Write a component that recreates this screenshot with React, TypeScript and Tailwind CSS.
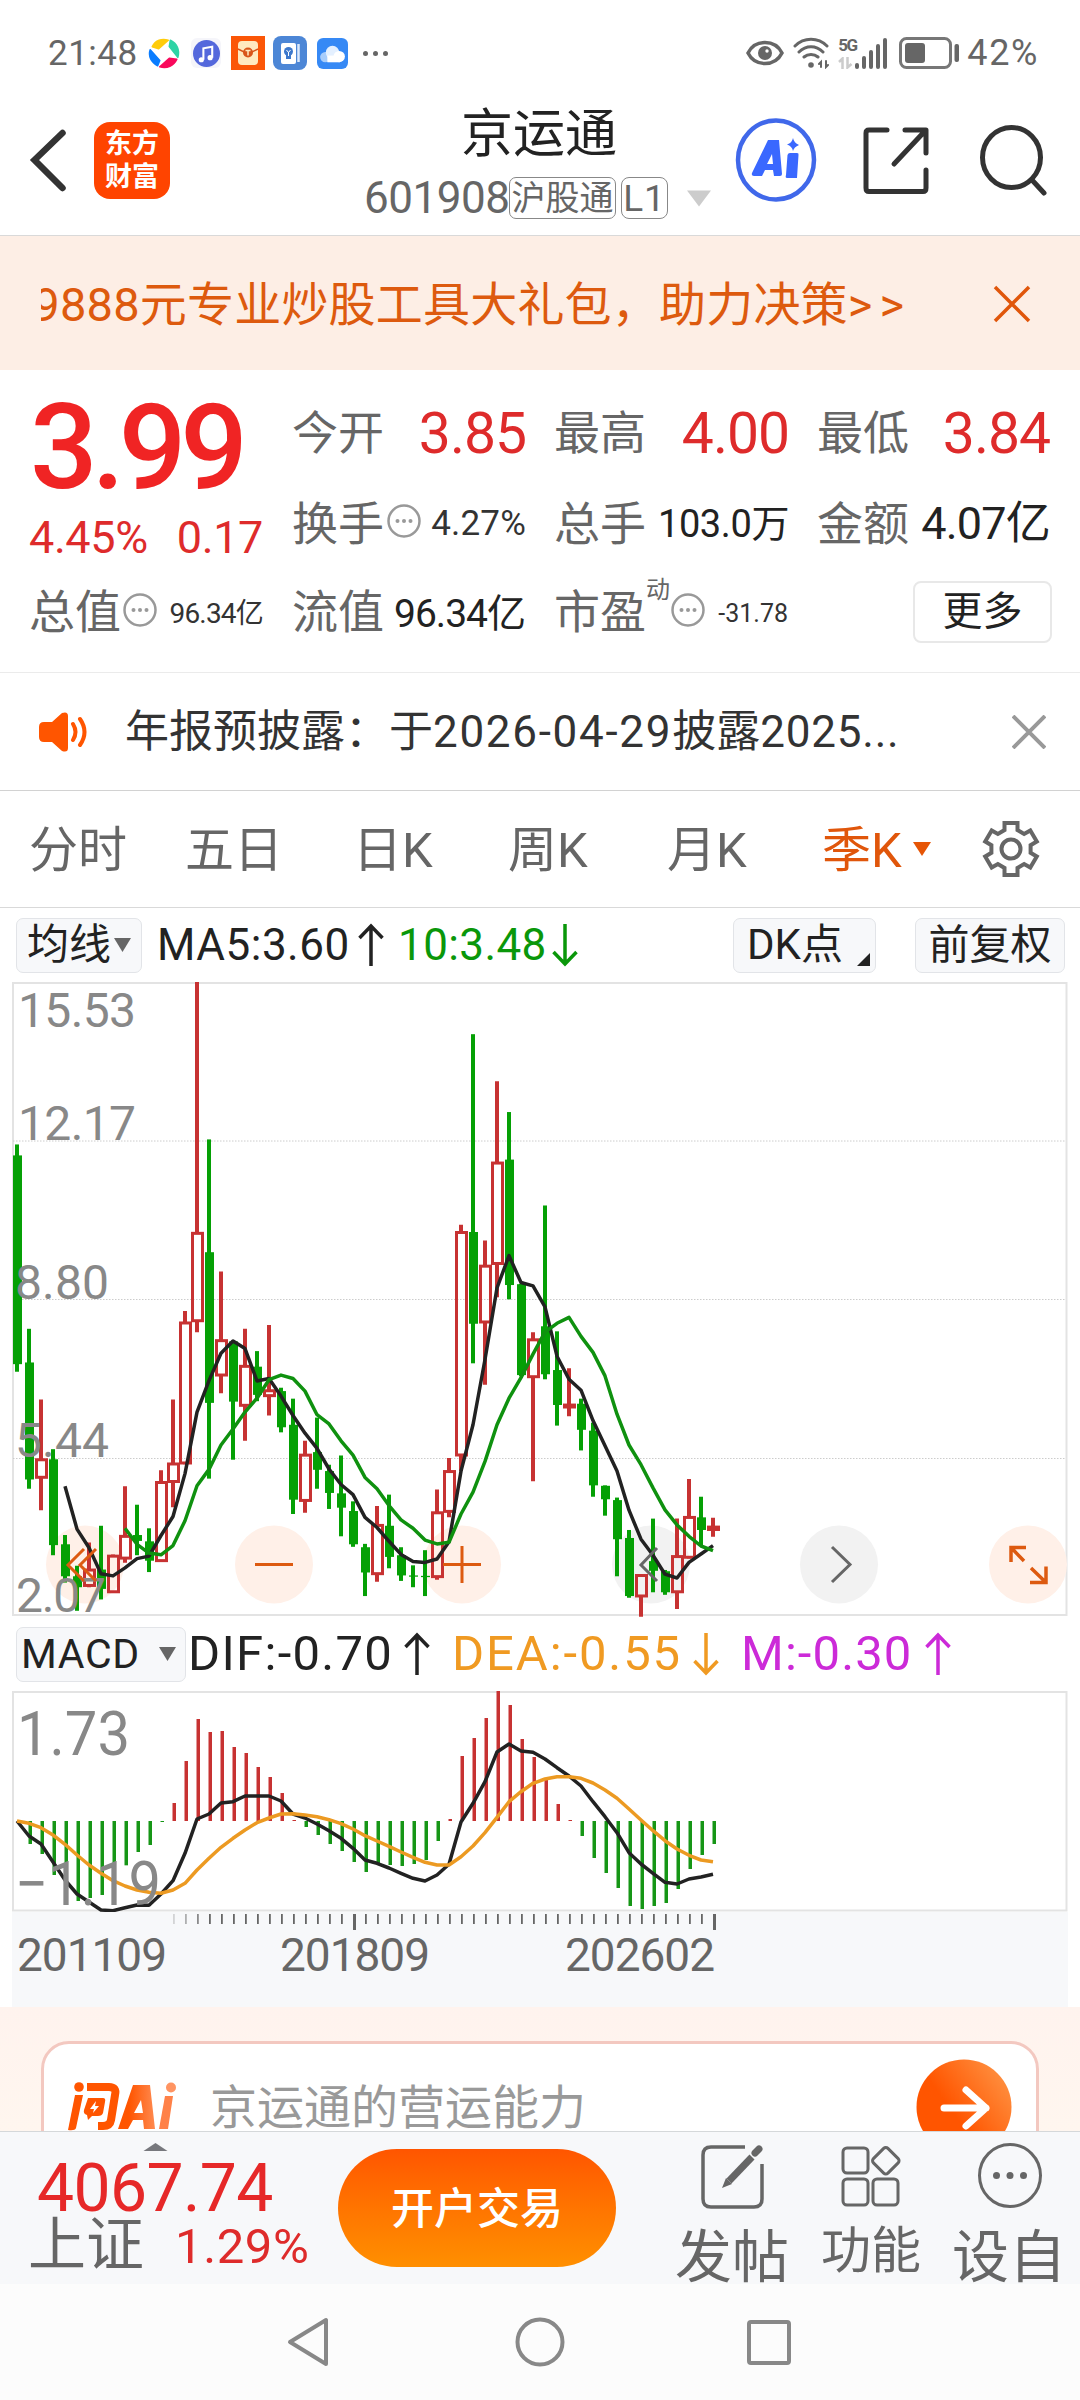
import React from 'react';

const RED = '#c73232';
const GREEN = '#05a005';

/* [high, body top, body bottom, low, rising] in chart units */
const CANDLES: [number, number, number, number, number][] = [
  [414, 440, 936, 954, 0], [852, 932, 1210, 1232, 0], [1020, 1162, 1206, 1283, 1], [1138, 1162, 1366, 1390, 0],
  [1342, 1364, 1440, 1455, 0], [1415, 1440, 1466, 1522, 0], [1360, 1424, 1463, 1466, 1], [1320, 1424, 1470, 1495, 0],
  [1388, 1391, 1478, 1480, 1], [1226, 1344, 1398, 1408, 1], [1270, 1342, 1356, 1390, 0], [1326, 1357, 1403, 1430, 0],
  [1188, 1216, 1404, 1406, 1], [1020, 1172, 1216, 1276, 1], [810, 837, 1172, 1174, 1], [28, 624, 834, 860, 1],
  [402, 670, 1028, 1208, 0], [716, 879, 963, 1005, 1], [880, 882, 1025, 1163, 0], [852, 940, 1035, 1118, 1],
  [905, 942, 1009, 1024, 0], [843, 998, 1012, 1058, 1], [992, 1000, 1086, 1098, 0], [1018, 1080, 1258, 1292, 0],
  [1118, 1151, 1261, 1289, 1], [1063, 1145, 1187, 1232, 0], [1175, 1190, 1242, 1280, 0], [1153, 1243, 1277, 1345, 0],
  [1262, 1285, 1364, 1370, 0], [1363, 1371, 1431, 1487, 0], [1273, 1318, 1435, 1453, 1], [1246, 1320, 1394, 1421, 0],
  [1371, 1390, 1438, 1451, 0], [1414, 1438, 1441, 1466, 0], [1378, 1439, 1442, 1487, 0], [1234, 1288, 1442, 1448, 1],
  [1159, 1190, 1287, 1300, 1], [605, 622, 1153, 1190, 1], [152, 622, 840, 934, 0], [642, 702, 837, 985, 1],
  [264, 457, 698, 777, 1], [337, 450, 748, 782, 0], [745, 746, 962, 965, 0], [860, 877, 967, 1214, 1],
  [559, 846, 960, 972, 0], [858, 950, 1033, 1082, 0], [946, 1032, 1039, 1060, 1], [1018, 1030, 1092, 1141, 0],
  [1075, 1094, 1224, 1251, 0], [1224, 1225, 1257, 1296, 0], [1253, 1259, 1352, 1440, 0], [1330, 1349, 1487, 1491, 0],
  [1435, 1437, 1488, 1536, 1], [1303, 1404, 1427, 1478, 0], [1425, 1428, 1478, 1484, 0], [1303, 1392, 1478, 1518, 1],
  [1209, 1299, 1396, 1398, 1], [1251, 1300, 1330, 1368, 0], [1301, 1322, 1330, 1346, 1],
];
const MA5 = [1226, 1328, 1372, 1434, 1439, 1420, 1398, 1392, 1343, 1298, 1196, 1050, 975, 910, 881, 899, 976, 970, 1012, 1058, 1100, 1136, 1185, 1222, 1246, 1300, 1324, 1357, 1388, 1405, 1407, 1399, 1358, 1190, 1080, 925, 755, 678, 742, 750, 800, 917, 972, 998, 1070, 1130, 1190, 1283, 1352, 1390, 1435, 1444, 1407, 1387, 1367];
const MA10 = [1326, 1364, 1385, 1389, 1367, 1308, 1225, 1186, 1128, 1090, 1050, 1017, 973, 962, 970, 1000, 1056, 1078, 1118, 1152, 1205, 1232, 1272, 1306, 1326, 1354, 1363, 1359, 1292, 1240, 1167, 1080, 1017, 968, 912, 860, 839, 825, 870, 908, 964, 1055, 1128, 1175, 1230, 1282, 1318, 1345, 1368, 1379];

/* Histogram, DIF and DEA heights: 633 is the zero line, three units per pixel */
const HIST = [633, 702, 732, 795, 846, 873, 864, 855, 800, 766, 726, 705, 636, 579, 453, 327, 366, 363, 411, 429, 471, 501, 549, 630, 651, 675, 702, 723, 756, 786, 762, 765, 768, 762, 750, 693, 627, 438, 384, 324, 243, 285, 387, 441, 510, 582, 630, 678, 744, 789, 834, 888, 897, 888, 879, 837, 777, 735, 702];
const DIF = [633, 678, 702, 756, 810, 852, 876, 900, 902, 893, 885, 886, 852, 812, 730, 627, 612, 579, 575, 558, 558, 558, 573, 612, 624, 642, 662, 685, 715, 750, 760, 774, 790, 805, 813, 795, 763, 636, 580, 515, 426, 402, 423, 427, 447, 473, 498, 528, 575, 620, 668, 728, 762, 790, 817, 822, 807, 801, 793];
const DEA = [633, 640, 653, 675, 703, 735, 765, 790, 812, 828, 840, 847, 850, 840, 820, 780, 745, 712, 685, 660, 638, 624, 612, 611, 615, 620, 629, 641, 657, 677, 693, 709, 726, 742, 757, 765, 765, 740, 708, 668, 622, 575, 545, 520, 507, 500, 500, 505, 519, 540, 565, 597, 630, 662, 692, 717, 736, 750, 755];

const px = (i: number) => 17 + 12 * i;
const ky = (v: number) => (v - 28) / 2.376;
const my = (v: number) => (v - 243) / 3;
const line = (vals: number[], start: number, f: (v: number) => number) =>
  vals.map((v, i) => `${px(i + start)},${f(v).toFixed(1)}`).join(' ');

const Arrow = ({ down = false, className = '' }: { down?: boolean; className?: string }) => (
  <svg viewBox="0 0 26 44" className={`h-[44px] w-[26px] shrink-0 ${className}`} fill="none" stroke="currentColor" strokeWidth="3.500">
    {down ? <path d="M13 1V41M1.500 29L13 41L24.500 29" /> : <path d="M13 43V3M1.500 15L13 3L24.500 15" />}
  </svg>
);

const Info = ({ className = '' }: { className?: string }) => (
  <svg viewBox="0 0 34 34" className={`h-[34px] w-[34px] shrink-0 ${className}`}>
    <circle cx="17" cy="17" r="15.500" fill="none" stroke="#999" strokeWidth="2.500" />
    {[10.5, 17, 23.5].map((x) => <circle key={x} cx={x} cy="17" r="2" fill="#999" />)}
  </svg>
);

function StatusBar() {
  return (
    <div className="flex h-[84px] items-center pt-[22px] text-[#666]">
      <span className="ml-[48px] w-[99px] text-[35px] tracking-[0.5px]">21:48</span>
      <svg viewBox="0 0 32 32" className="h-[34px] w-[34px]" fill="none" strokeWidth="7">
        <path d="M5 10C8 4 14 2 20 4L11 12Z" fill="#ffcc0a" stroke="#ffcc0a" strokeWidth="1.5" strokeLinejoin="round" />
        <path d="M22 4C28 7 31 13 29 20L21 10Z" fill="#2fd3a5" stroke="#2fd3a5" strokeWidth="1.5" strokeLinejoin="round" />
        <path d="M28 22C25 28 19 31 12 29L21 21Z" fill="#f9095c" stroke="#f9095c" strokeWidth="1.5" strokeLinejoin="round" />
        <path d="M10 28C4 25 1 19 3 13L12 23Z" fill="#0a7cff" stroke="#0a7cff" strokeWidth="1.5" strokeLinejoin="round" />
      </svg>
      <div className="ml-[10px] flex h-[30px] w-[30px] items-center justify-center rounded-md bg-[#f5f5fa]">
        <svg viewBox="0 0 26 26" className="h-[27px] w-[27px]">
          <circle cx="13" cy="13" r="13" fill="#5468dc" />
          <path d="M10 19V8L18.500 6.500V17" fill="none" stroke="#fff" strokeWidth="2" />
          <circle cx="8" cy="19" r="2.500" fill="#fff" /><circle cx="16.500" cy="17" r="2.500" fill="#fff" />
        </svg>
      </div>
      <svg viewBox="0 0 34 34" className="ml-[10px] h-[34px] w-[34px]">
        <rect width="34" height="34" fill="#fb5607" />
        <rect x="7" y="5" width="20" height="24" rx="4" fill="#ffe9c0" />
        <path d="M7 13L17 18L27 13" fill="none" stroke="#d9541a" strokeWidth="1.500" />
        <circle cx="17" cy="16.500" r="5" fill="#d9541a" /><path d="M14.500 14.500H19.500M17 14.500V19.500" stroke="#ffe9c0" strokeWidth="1.500" />
      </svg>
      <svg viewBox="0 0 34 34" className="ml-[8px] h-[34px] w-[34px]">
        <rect width="34" height="34" rx="8" fill="#4c86d6" />
        <rect x="8" y="7" width="15" height="21" rx="2" fill="#fff" />
        <path d="M25.500 8V26" stroke="#dce9fb" strokeWidth="2.500" />
        <circle cx="15.500" cy="15.500" r="4.500" fill="#3d78cc" /><rect x="13" y="19" width="5" height="4" fill="#3d78cc" />
        <path d="M13.500 14L15.500 16.500L17.500 14M15.500 16V20" stroke="#fff" fill="none" />
      </svg>
      <svg viewBox="0 0 30 30" className="ml-[10px] h-[31px] w-[31px]">
        <rect width="30" height="30" rx="6" fill="#3689f5" />
        <circle cx="8" cy="18.500" r="5" fill="#a8cdfb" /><circle cx="15" cy="14" r="6.500" fill="#e4f0ff" />
        <circle cx="21.500" cy="18" r="5.500" fill="#fff" /><rect x="10" y="17" width="12" height="6.500" fill="#fff" />
      </svg>
      <div className="ml-[15px] flex gap-[5px]">
        <i className="h-[5px] w-[5px] rounded-full bg-[#666]" /><i className="h-[5px] w-[5px] rounded-full bg-[#666]" /><i className="h-[5px] w-[5px] rounded-full bg-[#666]" />
      </div>
      <svg viewBox="0 0 38 26" className="ml-auto h-[26px] w-[38px]" fill="none" stroke="#666" strokeWidth="3.500">
        <path d="M2 13C9 -1 29 -1 36 13C29 27 9 27 2 13Z" /><circle cx="19" cy="13" r="7" fill="#666" stroke="none" /><circle cx="21" cy="11" r="1.700" fill="#fff" stroke="none" />
      </svg>
      <svg viewBox="0 0 38 32" className="ml-[9px] h-[32px] w-[38px]" fill="none" stroke="#666" strokeWidth="3" strokeLinecap="round">
        <path d="M2 9C11 0 25 0 34 9M6 15C13 8 23 8 30 15M11 20C15 16.500 21 16.500 25 20" />
        <circle cx="18" cy="28" r="2.800" fill="#666" stroke="none" />
        <path d="M28 30V25L26 27M33 24V30L35 28" strokeWidth="2" />
      </svg>
      <div className="ml-[7px] flex h-[32px] items-end">
        <div className="flex h-[32px] w-[17px] flex-col justify-between">
          <span className="text-[17px] font-bold tracking-[-1.5px]">5G</span>
          <svg viewBox="0 0 15 12" className="h-[12px] w-[15px]" fill="none" stroke="#ccc" strokeWidth="2.500"><path d="M1 5L4.500 1.500V12M9.500 0V10.500L13.500 7" /></svg>
        </div>
        <div className="flex items-end gap-[3px]">
          <i className="h-[6px] w-[4px] rounded bg-[#666]" /><i className="h-[13px] w-[4px] rounded bg-[#666]" /><i className="h-[19px] w-[4px] rounded bg-[#666]" /><i className="h-[25px] w-[4px] rounded bg-[#666]" /><i className="h-[31px] w-[4px] rounded bg-[#666]" />
        </div>
      </div>
      <svg viewBox="0 0 60 32" className="ml-[12px] h-[32px] w-[60px]">
        <rect x="1.500" y="1.500" width="50" height="29" rx="6" fill="none" stroke="#777" strokeWidth="3" />
        <rect x="6" y="6" width="20" height="20" rx="3" fill="#666" /><rect x="55.500" y="7" width="4.500" height="18" rx="2" fill="#666" />
      </svg>
      <span className="ml-[8px] mr-[41px] text-[36px] tracking-[1.6px]">42%</span>
    </div>
  );
}

function Header() {
  return (
    <header className="flex h-[152px] items-start border-b border-[#d9d9d9] text-[#333]">
      <svg viewBox="0 0 40 64" className="mt-[44px] ml-[29px] h-[64px] w-[40px]" fill="none" stroke="#333" strokeWidth="6.500" strokeLinecap="round">
        <path d="M33.500 5L5.500 32L33.500 60" />
      </svg>
      <div className="mt-[38px] ml-[25px] flex h-[77px] w-[76px] flex-col items-center justify-center gap-[6px] rounded-[16px] bg-[#ff4400] text-[27px] font-bold text-white">
        <span>东方</span><span>财富</span>
      </div>
      <div className="ml-[194px] flex w-[360px] flex-col">
        <h1 className="mt-[25px] ml-[97px] text-[52px] text-[#222]">京运通</h1>
        <div className="mt-[15px] flex items-center text-[44px] text-[#666]">
          <span className="w-[145px] tracking-[-0.5px]">601908</span>
          <span className="flex h-[42px] w-[107px] items-center justify-center rounded-[7px] border border-[#888] text-[34px]">沪股通</span>
          <span className="ml-[5px] flex h-[42px] w-[47px] items-center justify-center rounded-[8px] border border-[#888] text-[37px] tracking-[1px]">L1</span>
          <svg viewBox="0 0 24 16" className="ml-[19px] h-[17px] w-[24px]"><path d="M0 0H24L12 16Z" fill="#ccc" /></svg>
        </div>
      </div>
      <svg viewBox="0 0 82 84" className="mt-[34px] ml-[11px] h-[84px] w-[82px]">
        <ellipse cx="41" cy="42" rx="38" ry="39.500" fill="none" stroke="#4068ea" strokeWidth="4.500" />
        <path fillRule="evenodd" d="M33 22H44L47 56Q47 58 45 58H39L38 52H30L27 58H19Q16 58 17 55ZM37 36L32 46H38Z" fill="#3a68ff" />
        <path d="M55 35H62Q64 35 63.500 37L62 60H52Q50 60 51 57L52.500 37Q53 35 55 35Z" fill="#3a68ff" />
        <path d="M58 20Q59 25 64 27Q59 29 58 33Q57 28 52 26.500Q57 25 58 20Z" fill="#3a68ff" />
      </svg>
      <svg viewBox="0 0 68 70" className="mt-[40px] ml-[46px] h-[70px] w-[68px]" fill="none" stroke="#333" strokeWidth="5" strokeLinecap="round" strokeLinejoin="round">
        <path d="M24 6H6Q3 6 3 9V64Q3 67.500 6 67.500H60Q63 67.500 63 64V46" /><path d="M42 6H63V29M62 7L31 40" />
      </svg>
      <svg viewBox="0 0 70 72" className="mt-[40px] ml-[47px] h-[72px] w-[70px]" fill="none" stroke="#333" strokeWidth="5" strokeLinecap="round">
        <ellipse cx="33.500" cy="33.500" rx="29" ry="30" /><path d="M54 56L66 69" />
      </svg>
    </header>
  );
}

function Banner() {
  return (
    <div className="flex h-[134px] items-center bg-[#fdeee5] pt-[2px] text-[47px] text-[#dd5a0e]">
      <div className="ml-[41px] flex w-[870px] justify-end overflow-hidden whitespace-nowrap py-2">
        <span className="tracking-[0.2px]">9888元专业炒股工具大礼包，助力决策<span className="tracking-[7px]">&gt;&gt;</span></span>
      </div>
      <svg viewBox="0 0 38 38" className="ml-[82px] h-[38px] w-[38px]" stroke="#e0560b" strokeWidth="3.500"><path d="M2 2L36 36M36 2L2 36" /></svg>
    </div>
  );
}

const label = 'text-[46px] text-[#666]';

function Quote() {
  return (
    <section className="h-[303px] border-b border-[#ebebeb] pl-[29px] pr-[28px]">
      <div className="flex h-[206px]">
        <div className="w-[263px] text-[#f02424]">
          <div className="mt-[18px] h-[119px] pl-[1px] text-[119px] font-medium tracking-[-6px]">3.99</div>
          <div className="mt-[8px] flex w-[234px] justify-between text-[45px] tracking-[-0.4px] text-[#de2b2b]"><span>4.45%</span><span>0.17</span></div>
        </div>
        <div className="grid flex-1 auto-rows-[91px] grid-cols-[234px_235px_233px] gap-x-[28px] pt-[17px]">
          {[['今开', '3.85'], ['最高', '4.00'], ['最低', '3.84']].map(([k, v]) => (
            <div key={k} className="flex items-center justify-between"><span className={label}>{k}</span><span className="pt-[1px] text-[57px] tracking-[-1px] text-[#de2b2b]">{v}</span></div>
          ))}
          <div className="flex items-center"><span className={label}>换手</span><Info className="ml-[3px] -mt-[6px]" /><span className="ml-auto text-[35px] tracking-[0.2px] text-[#333]">4.27%</span></div>
          <div className="flex items-center justify-between"><span className={label}>总手</span><span className="text-[38px] tracking-[-0.4px] text-[#222]">103.0万</span></div>
          <div className="flex items-center justify-between"><span className={label}>金额</span><span className="text-[45px] tracking-[-0.8px] text-[#222]">4.07亿</span></div>
        </div>
      </div>
      <div className="grid h-[72px] grid-cols-[234px_234px_235px_1fr] items-center gap-x-[28px]">
        <div className="flex items-center"><span className={label}>总值</span><Info className="ml-[2px] -mt-[5px]" /><span className="ml-auto pt-[3px] text-[28px] tracking-[-0.8px] text-[#333]">96.34亿</span></div>
        <div className="flex items-center justify-between pl-[1px]"><span className={label}>流值</span><span className="pt-[4px] text-[39px] tracking-[-1px] text-[#222]">96.34亿</span></div>
        <div className="flex items-center pl-[1px]"><span className={label}>市盈</span><span className="-mt-[45px] text-[24px] text-[#666]">动</span><Info className="ml-[1px] -mt-[5px]" /><span className="ml-auto pt-[3px] text-[25px] text-[#333]">-31.78</span></div>
        <div className="ml-auto flex h-[62px] w-[139px] items-center justify-center rounded-[8px] border-2 border-[#e8e8e8] pb-[1px] text-[40px] text-[#222]">更多</div>
      </div>
    </section>
  );
}

function Notice() {
  return (
    <div className="flex h-[118px] items-center border-b border-[#d2d2d2] text-[#333]">
      <svg viewBox="0 0 52 44" className="ml-[37px] h-[44px] w-[52px]" fill="none" stroke="#ff5500" strokeWidth="4" strokeLinecap="round">
        <path d="M7 12H15L25 3Q31 1 31 6V38Q31 43 25 41L15 32H7Q2 32 2 27V17Q2 12 7 12Z" fill="#ff5500" stroke="none" />
        <path d="M36 14Q41 22 36 30M43 9Q52 22 43 35" />
      </svg>
      <span className="ml-[36px] w-[779px] text-[44px] whitespace-nowrap">年报预披露：于<span className="tracking-[1.7px]">2026-04-29</span>披露<span className="tracking-[0.8px]">2025...</span></span>
      <svg viewBox="0 0 34 34" className="ml-[108px] h-[34px] w-[34px]" stroke="#999" strokeWidth="4"><path d="M1 1L33 33M33 1L1 33" /></svg>
    </div>
  );
}

const rad = Math.PI / 180;
const gear = [0, 60, 120, 180, 240, 300]
  .flatMap((a) => [[a - 19, 20], [a - 14, 26.8], [a + 14, 26.8], [a + 19, 20]].map(([t, r]) => `${(30 + r * Math.sin(t * rad)).toFixed(1)},${(30 - r * Math.cos(t * rad)).toFixed(1)}`))
  .join(' ');

function Tabs() {
  return (
    <nav className="flex h-[117px] items-center border-b border-[#d9d9d9] text-[49px] whitespace-nowrap text-[#666]">
      <span className="mt-[3px] ml-[29px] w-[156px]">分时</span>
      <span className="mt-[3px] w-[168px]">五日</span>
      <span className="mt-[3px] w-[155px]">日K</span>
      <span className="mt-[3px] w-[159px]">周K</span>
      <span className="mt-[3px] w-[155px]">月K</span>
      <span className="mt-[3px] w-[91px] text-[#e0560b]">季K</span>
      <svg viewBox="0 0 18 14" className="h-[14px] w-[18px]"><path d="M0 0H18L9 14Z" fill="#e65505" /></svg>
      <svg viewBox="0 0 60 60" className="ml-[50px] h-[60px] w-[60px]" fill="none" stroke="#666" strokeWidth="4"><polygon points={gear} /><circle cx="30" cy="30" r="9.500" /></svg>
    </nav>
  );
}

const chip = 'flex shrink-0 items-center rounded-[7px] border-[1.5px] border-[#e2e4e8] bg-[#f7f8fa] text-[#222]';

function KLine() {
  return (
    <>
      <div className="flex h-[74px] items-center text-[44px] whitespace-nowrap text-[#222]">
        <div className={`${chip} ml-[16px] h-[55px] w-[126px] pl-[10px] text-[42px]`}>均线<svg viewBox="0 0 17 14" className="ml-[3px] h-[14px] w-[17px]"><path d="M0 0H17L8.500 14Z" fill="#666" /></svg></div>
        <span className="ml-[15px] w-[200px] shrink-0 tracking-[0.5px]">MA5:3.60</span><Arrow className="ml-[1px]" />
        <span className="ml-[14px] w-[150px] shrink-0 tracking-[0.4px] text-[#0a970a]">10:3.48</span><Arrow down className="ml-[4px] text-[#0a970a]" />
        <div className={`${chip} relative ml-auto h-[55px] w-[143px] pl-[13px] text-[42px]`}>DK点
          <svg viewBox="0 0 14 14" className="absolute right-[5px] bottom-[6px] h-[13px] w-[13px]"><path d="M14 0V14H0Z" fill="#222" /></svg>
        </div>
        <div className={`${chip} mr-[15px] ml-[39px] h-[55px] w-[150px] justify-center text-[41px]`}>前复权</div>
      </div>
      <div className="relative mx-[12px] h-[635px]">
        <svg viewBox="12 0 1056 635" className="block h-[635px] w-[1056px]">
          <rect x="13" y="1" width="1053.500" height="632" fill="none" stroke="#e3e3e3" strokeWidth="2" />
          {[159, 317.5, 476.5].map((y) => <line key={y} x1="13" x2="1066" y1={y} y2={y} stroke="#ccc" strokeDasharray="1.500 1.500" />)}
          {[274, 462, 85, 1028].map((x) => <circle key={x} cx={x} cy="582.500" r="39" fill="#fff0e8" />)}
          {[651, 839].map((x) => <circle key={x} cx={x} cy="582.500" r="39" fill="#f2f2f2" />)}
          {CANDLES.map(([h, t, b, l, up], i) => up ? (
            <g key={i} stroke={RED}>
              <path d={`M${px(i)} ${ky(h)}V${ky(t)}M${px(i)} ${ky(b)}V${Math.min(ky(l), 635)}`} strokeWidth="4" />
              <rect x={px(i) - 4.5} y={ky(t) + 0.5} width="10" height={ky(b) - ky(t) - 1} fill={b - t < 12 ? RED : '#fff'} fillOpacity={b - t < 12 ? 1 : 0} strokeWidth="3" />
            </g>
          ) : (
            <g key={i} fill={GREEN}>
              <rect x={px(i) - 2} y={ky(h)} width="4" height={ky(l) - ky(h)} />
              <rect x={px(i) - 4} y={ky(t)} width="9" height={ky(b) - ky(t)} />
            </g>
          ))}
          <polyline points={line(MA5, 4, ky)} fill="none" stroke="#222" strokeWidth="3.500" strokeLinejoin="round" />
          <polyline points={line(MA10, 9, ky)} fill="none" stroke="#0f910f" strokeWidth="3.500" strokeLinejoin="round" />
          <g fill="#888" fontSize="48">
            <text x="18" y="45" textLength="118">15.53</text>
            <text x="18" y="158" textLength="118">12.17</text>
            <text x="15" y="317" textLength="94">8.80</text>
            <text x="15" y="475" textLength="94">5.44</text>
            <text x="16" y="630" textLength="90">2.07</text>
          </g>
          <g fill="none" stroke="#dd5a10" strokeWidth="3">
            <path d="M84 567L68 583L84 599M96 567L80 583L96 599" />
            <path d="M255 582.500H293M443 582.500H481M462 564V601" />
            <path d="M1011 580V565.500H1026M1011 565.500L1024 579M1046 584.500V600.500H1030M1046 600.500L1031 586" strokeWidth="3.500" />
          </g>
          <g fill="none" stroke="#666" strokeWidth="3"><path d="M657 566L641 583L657 599M832 565L850 582.500L832 600" /></g>
        </svg>
      </div>
    </>
  );
}

function Macd() {
  return (
    <>
      <div className="flex h-[74px] items-center text-[49px] whitespace-nowrap text-[#222]">
        <div className={`${chip} ml-[16px] h-[55px] w-[170px] pl-[4px] text-[41px] tracking-[0.6px]`}>MACD<svg viewBox="0 0 17 14" className="ml-auto mr-[9px] h-[14px] w-[17px]"><path d="M0 0H17L8.500 14Z" fill="#666" /></svg></div>
        <span className="ml-[2px] w-[216px] shrink-0 pb-[2px] tracking-[1.3px]">DIF:-0.70</span><Arrow />
        <span className="ml-[22px] w-[242px] shrink-0 pb-[2px] tracking-[1.9px] text-[#f09a22]">DEA:-0.55</span><Arrow down className="-ml-[1px] text-[#f09a22]" />
        <span className="ml-[22px] w-[184px] shrink-0 pb-[2px] tracking-[1.1px] text-[#cc2ad8]">M:-0.30</span><Arrow className="text-[#cc2ad8]" />
      </div>
      <div className="mx-[12px]">
        <svg viewBox="12 0 1056 221" className="block h-[221px] w-[1056px]">
          <rect x="13" y="1" width="1053.500" height="218.500" fill="none" stroke="#e3e3e3" strokeWidth="2" />
          {HIST.map((v, i) => {
            const up = v < 633;
            return <rect key={i} x={px(i) - 0.5} y={up ? my(v) : 130} width="3.500" height={Math.abs(v - 633) / 3} fill={up ? RED : '#169616'} />;
          })}
          <polyline points={line(DIF, 0, my)} fill="none" stroke="#222" strokeWidth="3.500" strokeLinejoin="round" />
          <polyline points={line(DEA, 0, my)} fill="none" stroke="#ec9a22" strokeWidth="3.500" strokeLinejoin="round" />
          <g fill="#888" fontSize="61">
            <text x="17" y="64" textLength="113" lengthAdjust="spacingAndGlyphs">1.73</text>
            <text x="15" y="214" textLength="146" lengthAdjust="spacingAndGlyphs">−1.19</text>
          </g>
        </svg>
        <svg viewBox="12 0 1056 95" className="block h-[95px] w-[1056px] bg-[#f7f8fa]">
          {Array.from({ length: 46 }, (_, k) => k + 13).map((i) => {
            const major = i === 28 || i === 58;
            return <rect key={i} x={px(i)} y="2" width={major ? 3 : 1.8} height={major ? 16 : 10} fill="#666" opacity={Math.min(1, (i - 12) / 4)} />;
          })}
          <g fill="#666" fontSize="46">
            <text x="17" y="59" textLength="150">201109</text>
            <text x="280" y="59" textLength="150">201809</text>
            <text x="565" y="59" textLength="150">202602</text>
          </g>
        </svg>
      </div>
    </>
  );
}

function AskAi() {
  return (
    <div className="h-[124px] overflow-hidden bg-gradient-to-b from-[#fff3ee] to-[#fff6ef] px-[41px] pt-[34px]">
      <div className="flex h-[132px] items-center rounded-[28px] border-[3px] border-[#f3c8c0] bg-white">
        <svg viewBox="0 0 110 50" className="ml-[23px] h-[50px] w-[110px]" fill="none" stroke="#ff5500" strokeWidth="8">
          <defs>
            <linearGradient id="ask" x1="0" x2="1"><stop offset="0.300" stopColor="#ff5500" /><stop offset="1" stopColor="#ff8a50" /></linearGradient>
          </defs>
          <circle cx="12" cy="5" r="4.800" fill="#ff5500" stroke="none" />
          <path d="M8 13H16L9 46Q8 49 1 48Z" fill="#ff5500" stroke="none" />
          <path d="M20 5H42Q50 5 48 13L44 38Q43 44 36 44H31" />
          <path d="M21 16H36Q39 16 38 20L36 31Q35 34 31 34H25L21 38L20 33Q16 32 17 28Z" fill="#ff5500" stroke="none" />
          <path d="M29 19L23 27H27L26 31L32 24H28Z" fill="#fff" stroke="none" />
          <path fillRule="evenodd" d="M66 3H83L88 47H77L76 38H66L61 47H51ZM74 18L67 31H76Z" fill="url(#ask)" stroke="none" />
          <circle cx="104" cy="5.500" r="5" fill="#ff9462" stroke="none" />
          <path d="M98 14H106L101 47H92Z" fill="#ff8148" stroke="none" />
        </svg>
        <span className="ml-[33px] text-[47px] text-[#999]">京运通的营运能力</span>
        <svg viewBox="0 0 96 96" className="ml-auto mr-[24px] h-[96px] w-[96px]" fill="none" stroke="#fff" strokeWidth="7" strokeLinecap="round" strokeLinejoin="round">
          <defs><linearGradient id="go" x1="0.200" y1="0.600" x2="0.900" y2="0.100"><stop offset="0.200" stopColor="#ff5500" /><stop offset="1" stopColor="#ff9040" /></linearGradient></defs>
          <circle cx="48" cy="48" r="47.500" fill="url(#go)" stroke="none" /><path d="M28 49H70M50 31L70 49L50 67" />
        </svg>
      </div>
    </div>
  );
}

function BottomBar() {
  return (
    <footer className="relative flex h-[153px] items-start overflow-hidden border-t border-[#d5d8da] bg-[#f7f8fa] whitespace-nowrap text-[#666]">
      <svg viewBox="0 0 24 8" className="absolute top-[11px] left-[143px] h-[8px] w-[25px]"><path d="M12 0L24 8H0Z" fill="#77787d" /></svg>
      <div className="w-[338px]">
        <div className="mt-[24px] ml-[37px] text-[66px] tracking-[-0.6px] text-[#e62828]">4067.74</div>
        <div className="-mt-[6px] flex items-center"><span className="ml-[28px] text-[58px]">上证</span><span className="mt-[2px] ml-[31px] text-[49px] tracking-[0.6px] text-[#de2b2b]">1.29%</span></div>
      </div>
      <div className="mt-[17px] flex h-[118px] w-[278px] items-center justify-center rounded-full bg-gradient-to-b from-[#ff5500] to-[#ff8f00] pt-[2px] text-[43px] font-medium text-white">开户交易</div>
      <div className="ml-[58px] flex w-[116px] flex-col items-center">
        <svg viewBox="0 0 64 66" className="mt-[12px] h-[66px] w-[64px]" fill="none" stroke="#666" strokeWidth="3.500">
          <path d="M45 3H11Q3 3 3 11V55Q3 63 11 63H54Q62 63 62 55V20" /><path d="M29 37L52 13" strokeWidth="7" /><path d="M55 9L59 5" strokeWidth="7" strokeLinecap="round" /><path d="M22 44L26 34L32 40Z" fill="#666" stroke="none" />
        </svg>
        <span className="mt-[19px] text-[57px]">发帖</span>
      </div>
      <div className="ml-[30px] flex w-[102px] flex-col items-center">
        <svg viewBox="0 0 62 66" className="mt-[11px] h-[66px] w-[62px]" fill="none" stroke="#666" strokeWidth="3">
          <rect x="3" y="5" width="25" height="25" rx="4" /><rect x="3" y="36" width="25" height="26" rx="4" /><rect x="33" y="36" width="25" height="26" rx="4" />
          <rect x="35.500" y="7.500" width="20.500" height="20.500" rx="3" transform="rotate(45 45.800 17.800)" />
        </svg>
        <span className="mt-[17px] text-[50px]">功能</span>
      </div>
      <div className="ml-[29px] flex w-[116px] flex-col items-center">
        <svg viewBox="0 0 66 66" className="mt-[11px] h-[66px] w-[66px]" fill="none" stroke="#666" strokeWidth="3">
          <ellipse cx="34" cy="32.500" rx="30.500" ry="31" />{[20.5, 34, 47.5].map((x) => <circle key={x} cx={x} cy="32.500" r="3.500" fill="#666" stroke="none" />)}
        </svg>
        <span className="mt-[20px] text-[57px]">设自</span>
      </div>
    </footer>
  );
}

function SystemNav() {
  return (
    <div className="flex h-[116px] items-center bg-[#fcfcfc]">
      <svg viewBox="0 0 46 52" className="ml-[286px] h-[52px] w-[46px]" fill="none" stroke="#888" strokeWidth="4" strokeLinejoin="round"><path d="M4 26L40 4V48Z" /></svg>
      <svg viewBox="0 0 52 52" className="ml-[182px] h-[52px] w-[52px]" fill="none" stroke="#888" strokeWidth="4"><circle cx="26" cy="26" r="22.500" /></svg>
      <svg viewBox="0 0 48 48" className="ml-[179px] h-[48px] w-[48px]" fill="none" stroke="#888" strokeWidth="4"><rect x="4" y="4" width="40" height="41" rx="2" /></svg>
    </div>
  );
}

export default function App() {
  return (
    <main className="h-[2400px] w-[1080px] overflow-hidden bg-white font-['Roboto','Noto_Sans_CJK_SC',sans-serif] leading-none [&_*]:leading-none">
      <StatusBar />
      <Header />
      <Banner />
      <Quote />
      <Notice />
      <Tabs />
      <KLine />
      <Macd />
      <AskAi />
      <BottomBar />
      <SystemNav />
    </main>
  );
}
